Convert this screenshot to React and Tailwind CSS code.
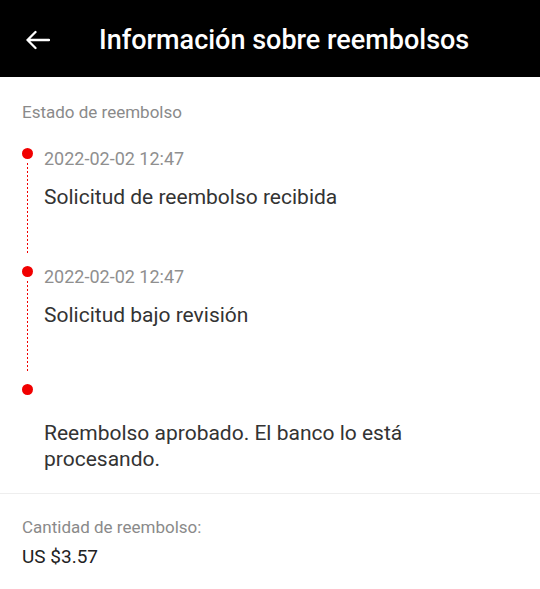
import React from "react";

const steps = [
  { time: "2022-02-02 12:47", text: "Solicitud de reembolso recibida" },
  { time: "2022-02-02 12:47", text: "Solicitud bajo revisión" },
  { time: "", text: "Reembolso aprobado. El banco lo está procesando." },
];

export default function App() {
  return (
    <div className="min-h-screen bg-white font-['Roboto',sans-serif]">
      {/* header */}
      <header className="flex h-[77px] items-center bg-black pt-[3px]">
        <svg
          width="24"
          height="24"
          viewBox="0 0 24 24"
          fill="none"
          stroke="white"
          strokeWidth="2.3"
          strokeLinecap="round"
          strokeLinejoin="round"
          className="ml-[26px]"
        >
          <path d="M23 12H1.5M9.5 4L1.5 12L9.5 20" />
        </svg>
        <h1 className="ml-[49px] text-[27px] font-medium leading-none text-white">
          Información sobre reembolsos
        </h1>
      </header>

      {/* status */}
      <section className="border-b border-[#eeeeee] pb-[21px] pt-[25px]">
        <p className="pl-[22px] text-[17px] leading-[20px] text-[#8a8a8a]">Estado de reembolso</p>

        <ol className="mt-[26px]">
          {steps.map((s, i) => (
            <li
              key={i}
              className={
                i < steps.length - 1
                  ? "relative h-[116px] pl-[44px] pr-[44px]"
                  : "relative pl-[44px] pr-[44px]"
              }
            >
              <span className="absolute left-[22px] top-0 h-[11px] w-[11px] rounded-full bg-[#f10000]" />
              {i < steps.length - 1 && (
                <span className="absolute bottom-[10px] left-[27px] top-[15px] w-px bg-[repeating-linear-gradient(to_bottom,#f10000_0_2px,transparent_2px_4px)]" />
              )}
              <p className="mt-[2px] h-[22px] text-[18px] leading-[22px] text-[#8f8f8f]">{s.time}</p>
              <p className="mt-[14px] text-[21px] leading-[26px] text-[#333333]">{s.text}</p>
            </li>
          ))}
        </ol>
      </section>

      {/* amount */}
      <section className="px-[22px] pt-[23px]">
        <p className="text-[17px] leading-[20px] text-[#8a8a8a]">Cantidad de reembolso:</p>
        <p className="mt-[8px] text-[19px] leading-[24px] text-[#222222]">US $3.57</p>
      </section>
    </div>
  );
}
